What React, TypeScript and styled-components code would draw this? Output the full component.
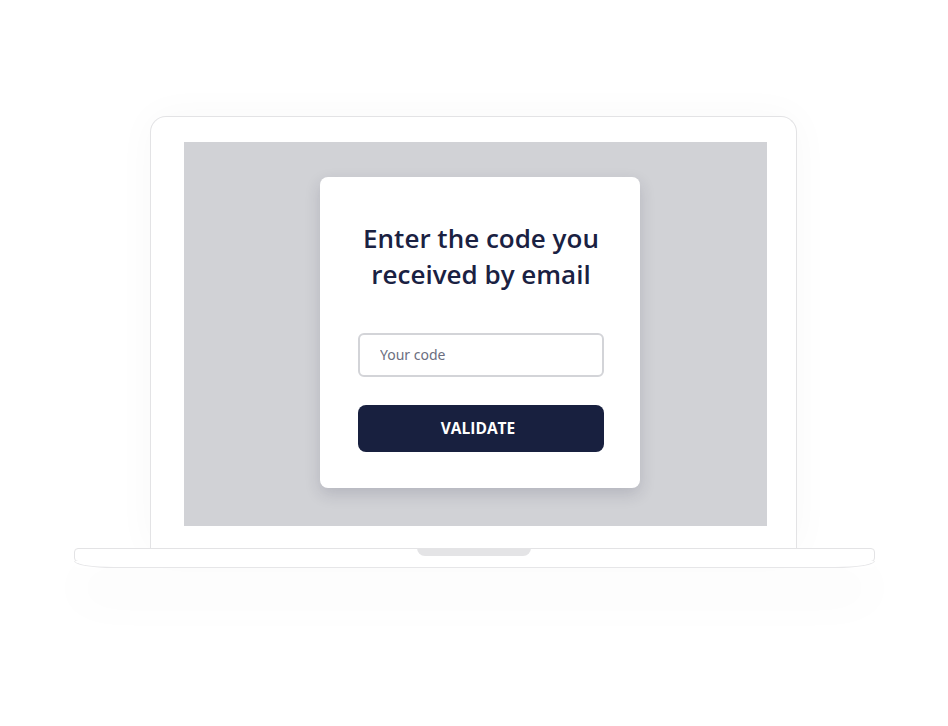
import React from "react";
import styled, { createGlobalStyle } from "styled-components";

const Global = createGlobalStyle`
  html, body { margin: 0; padding: 0; background: #ffffff; }
  body { font-family: "Noto Sans", "Open Sans", sans-serif; }
  * { box-sizing: border-box; }
`;

const Page = styled.div`
  width: 948px;
  height: 726px;
  display: flex;
  flex-direction: column;
  align-items: center;
  padding-top: 116px;
  overflow: hidden;
`;

const Laptop = styled.div`
  display: flex;
  flex-direction: column;
  align-items: center;
`;

const Lid = styled.div`
  width: 647px;
  height: 433px;
  margin-left: -1px;
  border: 1.5px solid #e3e3e5;
  border-bottom: none;
  border-radius: 16px 16px 0 0;
  background: #ffffff;
  padding: 24.5px 29px 0 33px;
  box-shadow: 0 0 40px rgba(0, 0, 0, 0.03);
`;

const Screen = styled.div`
  height: 384px;
  background: #d1d2d6;
  display: flex;
  justify-content: center;
  align-items: flex-start;
  padding: 35px 0 0 9px;
`;

const Card = styled.div`
  width: 320px;
  height: 311px;
  background: #ffffff;
  border-radius: 8px;
  box-shadow: 0 6px 16px rgba(30, 34, 60, 0.16);
  display: flex;
  flex-direction: column;
  align-items: center;
  padding: 43px 0 0 2px;
`;

const Title = styled.h1`
  margin: 0;
  font-family: "Open Sans", "Noto Sans", sans-serif;
  font-weight: 600;
  font-size: 26px;
  line-height: 36px;
  color: #1a2142;
  text-align: center;
`;

const Input = styled.input`
  margin-top: 41px;
  width: 246px;
  height: 44px;
  border: 2px solid #d3d4d8;
  border-radius: 6px;
  padding: 0 0 0 20px;
  font-family: "Noto Sans", sans-serif;
  font-size: 14px;
  color: #1a2142;
  background: #ffffff;
  outline: none;
  &::placeholder {
    color: #6b6e80;
  }
`;

const Button = styled.button`
  margin-top: 28px;
  width: 246px;
  height: 47px;
  border: none;
  border-radius: 8px;
  background: #18203f;
  color: #ffffff;
  font-family: "Open Sans", "Noto Sans", sans-serif;
  font-weight: 700;
  font-size: 15.5px;
  padding: 0 6px 0 0;
  cursor: pointer;
`;

const Base = styled.div`
  width: 801px;
  display: flex;
  flex-direction: column;
  margin-top: -1px;
  border-radius: 6px;
  box-shadow: 0 30px 50px rgba(0, 0, 0, 0.035);
`;

const Deck = styled.div`
  height: 14px;
  border: 1.5px solid #e3e3e5;
  border-radius: 4px;
  background: #ffffff;
  display: flex;
  justify-content: center;
`;

const Notch = styled.div`
  width: 114px;
  height: 8px;
  margin-top: -1.5px;
  background: #e4e4e6;
  border-radius: 0 0 9px 9px;
`;

const Lip = styled.div`
  height: 7px;
  margin: -1.5px 0 0 0;
  border: 1.5px solid #e6e6e8;
  border-top: none;
  border-radius: 0 0 40px 40px / 0 0 7px 7px;
  background: #ffffff;
`;

export default function App() {
  return (
    <>
      <Global />
      <Page>
        <Laptop>
          <Lid>
            <Screen>
              <Card>
                <Title>
                  Enter the code you
                  <br />
                  received by email
                </Title>
                <Input placeholder="Your code" />
                <Button>VALIDATE</Button>
              </Card>
            </Screen>
          </Lid>
          <Base>
            <Deck>
              <Notch />
            </Deck>
            <Lip />
          </Base>
        </Laptop>
      </Page>
    </>
  );
}
